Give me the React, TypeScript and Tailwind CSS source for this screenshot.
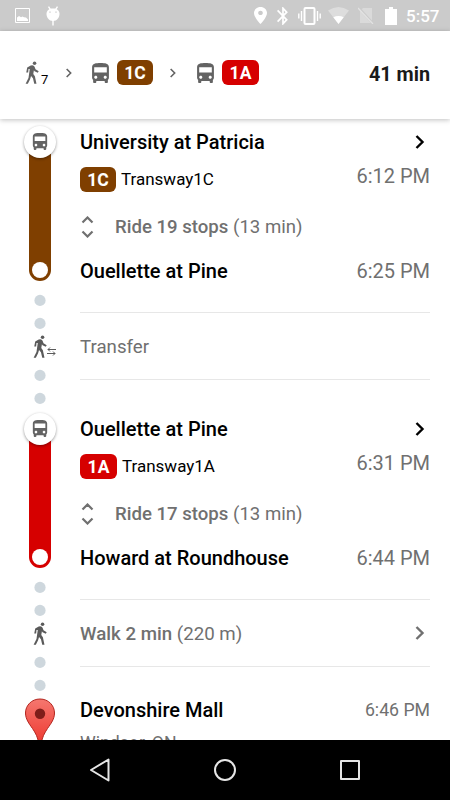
import type { ReactNode } from "react";
import clsx from "clsx";

type IconProps = { className?: string };

function Bus({ className }: IconProps) {
  return (
    <svg viewBox="4 2 16 19" fill="currentColor" className={className}>
      <path d="M4 16c0 .88.39 1.67 1 2.22V20c0 .55.45 1 1 1h1c.55 0 1-.45 1-1v-1h8v1c0 .55.45 1 1 1h1c.55 0 1-.45 1-1v-1.78c.61-.55 1-1.34 1-2.22V6c0-3.5-3.58-4-8-4s-8 .5-8 4v10zm3.5 1c-.83 0-1.5-.67-1.5-1.5S6.67 14 7.5 14s1.5.67 1.5 1.5S8.33 17 7.5 17zm9 0c-.83 0-1.5-.67-1.5-1.5s.67-1.5 1.5-1.5 1.5.67 1.5 1.5-.67 1.5-1.5 1.5zm1.5-6H6V6h12v5z" />
    </svg>
  );
}

function Walker({ className }: IconProps) {
  return (
    <svg viewBox="0 0 42 72" fill="currentColor" className={className}>
      <circle cx="29" cy="7" r="5.500" />
      <path d="M6 20 17 14Q26 11 29 18L32 26 42 32 39 37 29 32 27 29 25 41 30 48 35 71H28L24 54 18 47 15 57 8 71H1L10 53 14 25 10 25 9 36H3Z" />
    </svg>
  );
}

function Chevron({ className }: IconProps) {
  return (
    <svg viewBox="0 0 9 14" fill="none" stroke="currentColor" strokeWidth="2.4" className={className}>
      <path d="m1 1 6 6-6 6" />
    </svg>
  );
}

function Expand({ className }: IconProps) {
  return (
    <svg viewBox="0 0 12 22" fill="none" stroke="currentColor" strokeWidth="2.2" className={className}>
      <path d="m1 6.5 5-5 5 5M1 15.500l5 5 5-5" />
    </svg>
  );
}

function StatusBar() {
  return (
    <div className="flex h-[31px] shrink-0 items-center bg-[#cbcbcb] pl-[15px] pr-[10px] text-white">
      <svg viewBox="0 0 15 15" className="h-[15px] w-[15px]">
        <path d="M.5.5h14v14H.5z" fill="none" stroke="currentColor" />
        <path d="M2 13V9.500l2-1.500 2 1.200 1.500-.7 1.500.8 2 .2 2 2V13z" fill="currentColor" />
      </svg>
      <svg viewBox="0 0 14 20" className="ml-4 h-5 w-[14px]">
        <path d="m2.500.7 2 3M11.500.7l-2 3M7 14v5.500" stroke="currentColor" strokeWidth="1.4" />
        <path d="M.5 8C.5 4.500 3 2.500 7 2.500S13.500 4.500 13.500 8 11 15 7 15 .5 11.500.5 8z" fill="currentColor" />
        <path d="M4 5.500v1.300M10 5.500v1.300" stroke="#cbcbcb" strokeWidth="1.300" />
      </svg>

      <svg viewBox="5 2 14 20" preserveAspectRatio="none" fill="currentColor" className="ml-auto h-[17px] w-[13px]">
        <path d="M12 2C8.130 2 5 5.130 5 9c0 5.250 7 13 7 13s7-7.750 7-13c0-3.870-3.130-7-7-7zm0 9.500c-1.380 0-2.500-1.120-2.500-2.500s1.120-2.500 2.500-2.500 2.500 1.120 2.500 2.500-1.120 2.500-2.500 2.500z" />
      </svg>
      <svg viewBox="5 2 14 20" preserveAspectRatio="none" fill="currentColor" className="ml-[10px] h-[18px] w-[12px]">
        <path d="M17.710 7.710 12 2h-1v7.590L6.410 5 5 6.410 10.590 12 5 17.590 6.410 19 11 14.410V22h1l5.710-5.710-4.300-4.290 4.300-4.290zM13 5.830l1.880 1.880L13 9.590V5.830zm1.880 10.460L13 18.170v-3.760l1.880 1.880z" />
      </svg>
      <svg viewBox="0 0 23 18" fill="none" stroke="currentColor" className="ml-[9px] h-[18px] w-[23px]">
        <rect x="6.500" y="1" width="10" height="16" rx="1" strokeWidth="2" />
        <path d="M3.500 4v10M19.500 4v10M.8 6.500v5M22.200 6.500v5" strokeWidth="1.400" />
      </svg>
      <svg viewBox="0 0 21 17" fill="currentColor" className="ml-[7px] h-[17px] w-[21px]">
        <path d="M0 3.500Q10.500-3.500 21 3.500L10.500 17z" opacity=".35" />
        <path d="M5.300 10.300q5.200-2.700 10.400 0L10.500 17z" />
      </svg>
      <svg viewBox="0 0 16 17" className="ml-[9px] h-[17px] w-4">
        <path d="M5 1h9v15H2V4z" fill="currentColor" opacity=".3" />
        <path d="m1 1 14 15.500" stroke="#cbcbcb" strokeWidth="2.500" />
        <path d="m0 1 15 16" stroke="currentColor" strokeWidth="1.200" opacity=".45" />
      </svg>
      <svg viewBox="0 0 12 18" fill="currentColor" className="ml-[11px] h-[18px] w-3">
        <path d="M4 0h4v2h4v16H0V2h4z" />
      </svg>
      <span className="mt-px ml-[9px] w-[34px] text-[17px] leading-[31px] font-medium">5:57</span>
    </div>
  );
}

function RouteBadge({ name, color }: { name: string; color: string }) {
  return (
    <span
      className={clsx(
        "flex h-[25px] shrink-0 items-center justify-center rounded-[6px] pt-px text-[17.500px] font-bold text-white",
        name === "1A" ? "w-[37px]" : "w-9",
        color,
      )}
    >
      {name}
    </span>
  );
}

function Summary() {
  return (
    <header className="relative z-10 flex h-[88px] shrink-0 items-center bg-white pl-[25px] pr-5 pb-[5px] text-[#636363] shadow-[0_1px_5px_rgba(0,0,0,0.25)]">
      <Walker className="h-[23px] w-[14px]" />
      <span className="mt-[14px] ml-[2px] w-[8px] text-[13px] leading-none text-black">7</span>
      <Chevron className="ml-[17px] h-[10px] w-[6px]" />
      <Bus className="ml-5 h-5 w-[17px]" />
      <span className="ml-2">
        <RouteBadge name="1C" color="bg-[#7f3f00]" />
      </span>
      <Chevron className="ml-[17px] h-[10px] w-[6px]" />
      <Bus className="ml-[21px] h-5 w-[17px]" />
      <span className="ml-2">
        <RouteBadge name="1A" color="bg-[#d60000]" />
      </span>
      <span className="mt-[5px] ml-auto text-[19.800px] font-bold text-[#1a1a1a]">41 min</span>
    </header>
  );
}

type RideProps = {
  from: string;
  to: string;
  depart: string;
  arrive: string;
  route: string;
  line: string;
  stops: number;
  color: string;
};

function Ride({ from, to, depart, arrive, route, line, stops, color }: RideProps) {
  return (
    <section className="flex h-[155px] shrink-0">
      <div className="flex w-20 shrink-0 flex-col items-center">
        <div className="z-[1] flex h-8 w-8 shrink-0 items-center justify-center rounded-full bg-white text-[#636363] shadow-[0_1px_3px_rgba(0,0,0,0.4)]">
          <Bus className="mb-px h-[17px] w-4" />
        </div>
        <div className={clsx("-mt-[8px] flex w-[22px] flex-1 flex-col items-center justify-end rounded-b-full pb-[3px]", color)}>
          <span className="h-4 w-4 rounded-full bg-white" />
        </div>
      </div>
      <div className="flex flex-1 flex-col pt-1 pr-5">
        <div className="flex h-6 items-center justify-between">
          <h2 className="text-[20px] leading-6 font-medium text-black">{from}</h2>
          <Chevron className="mr-[5px] h-[14px] w-[10px] text-black" />
        </div>
        <div className="mt-[13px] flex h-[25px] items-center">
          <RouteBadge name={route} color={color} />
          <span className="mb-px ml-[5px] text-[17px] leading-6 text-black">{line}</span>
          <span className="mb-[8px] ml-auto text-[20px] leading-6">{depart}</span>
        </div>
        <div className="mt-[23px] flex h-6 items-center">
          <Expand className="ml-[1px] h-[22px] w-[13px]" />
          <p className="mb-px ml-[21px] text-[18.600px] leading-6">
            <span className="font-medium">Ride {stops} stops</span> (13 min)
          </p>
        </div>
        <div className="mt-5 flex h-6 items-center justify-between">
          <h2 className="text-[20px] leading-6 font-medium text-black">{to}</h2>
          <span className="text-[20px] leading-6">{arrive}</span>
        </div>
      </div>
    </section>
  );
}

function Dot() {
  return (
    <svg viewBox="0 0 12 12" className="h-3 w-3 shrink-0">
      <circle cx="6" cy="6.400" r="5.600" fill="#ced7dd" />
    </svg>
  );
}

function Connector({ icon, children }: { icon: ReactNode; children: ReactNode }) {
  return (
    <section className="flex h-[132px] shrink-0">
      <div className="flex w-20 shrink-0 flex-col items-center pt-[13px]">
        <Dot />
        <span className="h-[11px]" />
        <Dot />
        <div className="flex h-[40px] w-full items-center pb-[6px] pl-[33px] text-[#5a5a5a]">{icon}</div>
        <Dot />
        <span className="h-[11px]" />
        <Dot />
      </div>
      <div className="mt-[31px] mr-5 flex h-[68px] flex-1 items-center border-y border-[#e7e7e7] pt-[3px] text-[18.700px]">
        {children}
      </div>
    </section>
  );
}

function Destination() {
  return (
    <section className="flex shrink-0">
      <div className="flex w-20 shrink-0 justify-center">
        <svg viewBox="0 0 32 50" className="-mt-[2px] h-[50px] w-8">
          <defs>
            <linearGradient id="pin" x1="0" y1="0" x2="0" y2="1">
              <stop offset="0" stopColor="#f5776f" />
              <stop offset="1" stopColor="#ee3a31" />
            </linearGradient>
          </defs>
          <path
            d="M16 1C7.500 1 1.500 7.500 1.500 15c0 6 3.500 10.500 7 15.500 3 4.500 5.500 9 6 14.500h3c.5-5.500 3-10 6-14.500 3.500-5 7-9.500 7-15.500C30.500 7.500 24.500 1 16 1z"
            fill="url(#pin)"
            stroke="#b3261f"
            strokeWidth="1"
          />
          <circle cx="16" cy="15.700" r="5.200" fill="#7f1d19" />
        </svg>
      </div>
      <div className="flex-1 pr-5">
        <div className="-mt-[5px] flex h-[30px] items-center justify-between">
          <h2 className="text-[20px] font-medium text-black">Devonshire Mall</h2>
          <span className="text-[17.700px]">6:46 PM</span>
        </div>
        <p className="mt-[6px] text-[17.700px] leading-6">Windsor, ON</p>
      </div>
    </section>
  );
}

function NavBar() {
  return (
    <nav className="flex h-[60px] shrink-0 items-center justify-between bg-black pr-[90px] pl-[89px]">
      <svg viewBox="0 0 21 24" fill="none" stroke="#e6e6e6" strokeWidth="2" strokeLinejoin="round" className="h-6 w-[21px]">
        <path d="M19.500 1.500v21L2 12z" />
      </svg>
      <span className="h-[22px] w-[22px] rounded-full border-2 border-[#e6e6e6]" />
      <span className="h-5 w-5 rounded-[1px] border-2 border-[#e6e6e6]" />
    </nav>
  );
}

export default function App() {
  return (
    <div className="flex h-[800px] w-[450px] flex-col overflow-hidden bg-white font-[Roboto,sans-serif] text-[#707070]">
      <StatusBar />
      <Summary />
      <main className="flex min-h-0 flex-1 flex-col overflow-hidden pt-[7px]">
        <Ride
          from="University at Patricia"
          to="Ouellette at Pine"
          depart="6:12 PM"
          arrive="6:25 PM"
          route="1C"
          line="Transway1C"
          stops={19}
          color="bg-[#7f3f00]"
        />
        <Connector
          icon={
            <>
              <Walker className="h-[23px] w-[14px]" />
              <svg viewBox="0 0 9 9" fill="none" stroke="currentColor" strokeWidth="1" className="mt-[11px] h-[9px] w-[9px]">
                <path d="M9 2.500H1M3 .5l-2 2 2 2M0 6.500h8M6 4.500l2 2-2 2" />
              </svg>
            </>
          }
        >
          Transfer
        </Connector>
        <Ride
          from="Ouellette at Pine"
          to="Howard at Roundhouse"
          depart="6:31 PM"
          arrive="6:44 PM"
          route="1A"
          line="Transway1A"
          stops={17}
          color="bg-[#d60000]"
        />
        <Connector icon={<Walker className="h-[23px] w-[14px]" />}>
          <p>
            <span className="font-medium">Walk 2 min</span> (220 m)
          </p>
          <Chevron className="mr-[5px] mb-[3px] ml-auto h-[14px] w-[10px]" />
        </Connector>
        <Destination />
      </main>
      <NavBar />
    </div>
  );
}
